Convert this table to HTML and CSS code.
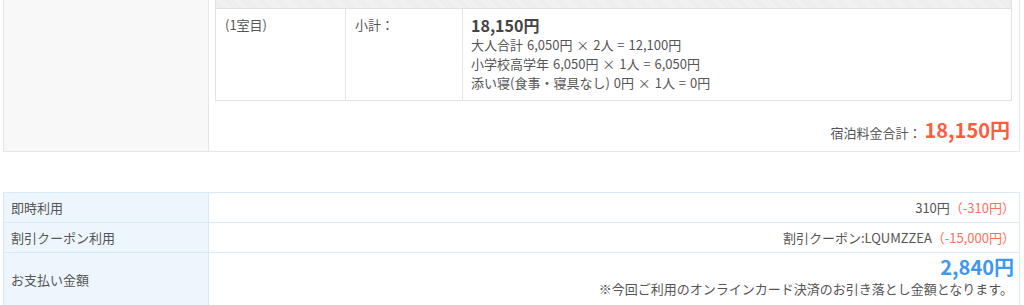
FILE: index.html
```html
<!DOCTYPE html>
<html lang="ja">
<head>
<meta charset="utf-8">
<link rel="stylesheet" href="styles.css">
</head>
<body>
<div class="page">
  <section class="stay">
    <div class="stay-side"></div>
    <div class="stay-main">
      <div class="room-table">
        <div class="room-head"></div>
        <div class="room-row">
          <div class="cell c-room">(1室目)</div>
          <div class="cell c-label">小計：</div>
          <div class="cell c-detail">
            <div class="subtotal">18,150円</div>
            <div class="line">大人合計 6,050円 × 2人 = 12,100円</div>
            <div class="line">小学校高学年 6,050円 × 1人 = 6,050円</div>
            <div class="line">添い寝(食事・寝具なし) 0円 × 1人 = 0円</div>
          </div>
        </div>
      </div>
      <div class="stay-total">
        <span class="total-label">宿泊料金合計：</span>
        <span class="total-value">18,150円</span>
      </div>
    </div>
  </section>

  <section class="pay">
    <div class="pay-row">
      <div class="pay-label">即時利用</div>
      <div class="pay-value">310円 <span class="minus">（-310円）</span></div>
    </div>
    <div class="pay-row">
      <div class="pay-label">割引クーポン利用</div>
      <div class="pay-value">割引クーポン:LQUMZZEA<span class="minus">（-15,000円）</span></div>
    </div>
    <div class="pay-row pay-row-final">
      <div class="pay-label">お支払い金額</div>
      <div class="pay-value">
        <div class="final-amount">2,840円</div>
        <div class="final-note">※今回ご利用のオンラインカード決済のお引き落とし金額となります。</div>
      </div>
    </div>
  </section>
</div>
</body>
</html>
```

FILE: styles.css
```css
html, body {
  margin: 0;
  padding: 0;
  background: #ffffff;
}

body {
  font-family: "Noto Sans CJK JP", "Noto Sans", sans-serif;
  font-size: 13px;
  color: #555555;
}

.page {
  padding: 0 4px 0 3px;
}

.stay {
  display: flex;
  border: 1px solid #e6e6e6;
  border-top: none;
  height: 152px;
  box-sizing: border-box;
}

.stay-side {
  width: 204px;
  flex: none;
  background: repeating-linear-gradient(180deg, #f7f7f7 0 1px, #f9f9f9 1px 2px);
  border-right: 1px solid #e6e6e6;
}

.stay-main {
  flex: 1;
  padding: 0 7px 0 6px;
  display: flex;
  flex-direction: column;
}

.room-table {
  border: 1px solid #e2e2e2;
  border-top: none;
}

.room-head {
  height: 8px;
  background-color: #f3f3f3;
  background-image: repeating-linear-gradient(45deg, #ebebeb 0 1px, transparent 1px 2px);
  border-bottom: 1px solid #e2e2e2;
}

.room-row {
  display: flex;
  height: 91px;
}

.cell {
  padding: 6px 8px 0 9px;
  line-height: 19px;
}

.c-room {
  width: 112px;
  flex: none;
  border-right: 1px solid #e6e6e6;
}

.c-label {
  width: 99px;
  flex: none;
  border-right: 1px solid #e6e6e6;
}

.c-detail {
  flex: 1;
  padding-top: 6px;
  padding-left: 8px;
}

.subtotal {
  font-size: 16px;
  font-weight: bold;
  line-height: 20px;
  color: #444444;
}

.line {
  line-height: 19px;
  word-spacing: 1px;
}

.stay-total {
  display: flex;
  justify-content: flex-end;
  align-items: baseline;
  padding: 14px 2px 0 0;
}

.total-label {
  font-size: 13px;
}

.total-value {
  font-size: 20px;
  font-weight: bold;
  color: #ff5b3f;
  margin-left: 3px;
}

.pay {
  margin-top: 40px;
  border: 1px solid #d8e9f8;
}

.pay-row {
  display: flex;
  border-top: 1px solid #d8e9f8;
  min-height: 29px;
}

.pay-row:first-child {
  border-top: none;
}

.pay-label {
  width: 197px;
  flex: none;
  background: #eef6fd;
  border-right: 1px solid #d8e9f8;
  padding-left: 7px;
  display: flex;
  align-items: center;
}

.pay-value {
  flex: 1;
  text-align: right;
  padding-right: 4px;
  display: flex;
  align-items: center;
  justify-content: flex-end;
}

.minus {
  color: #ff6f5e;
}

.pay-row-final {
  min-height: 52px;
}

.pay-row-final .pay-value {
  flex-direction: column;
  align-items: flex-end;
  justify-content: flex-start;
  padding-top: 2px;
  padding-right: 6px;
}

.final-amount {
  font-size: 20px;
  font-weight: bold;
  color: #3d99f0;
  line-height: 24px;
  margin-right: -1px;
}

.final-note {
  line-height: 20px;
}
```
